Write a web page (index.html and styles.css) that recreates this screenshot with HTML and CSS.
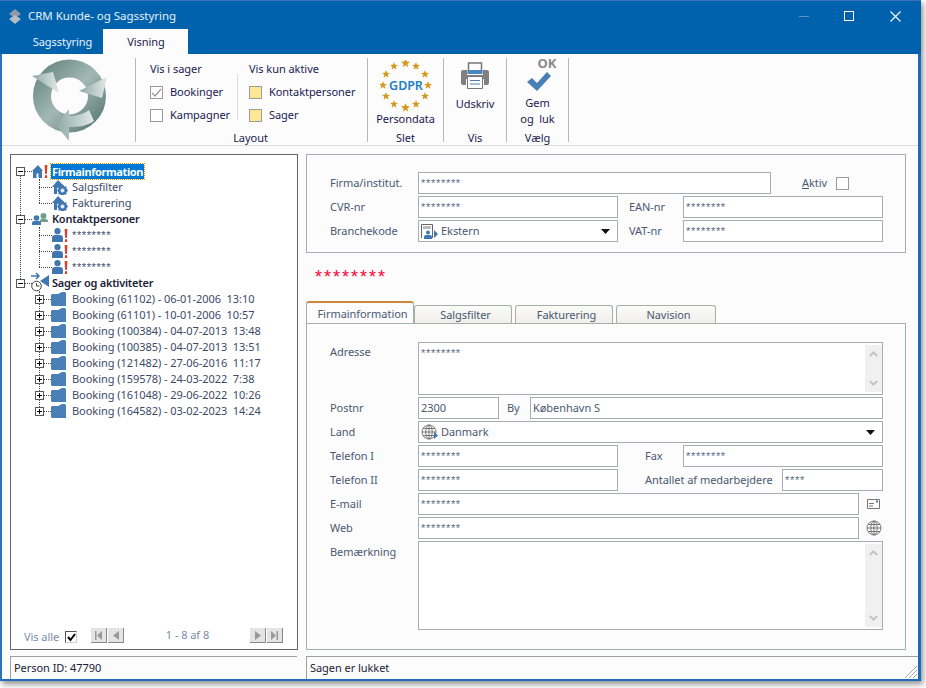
FILE: index.html
```html
<!DOCTYPE html>
<html lang="da">
<head>
<meta charset="utf-8">
<title>CRM Kunde- og Sagsstyring</title>
<link rel="stylesheet" href="styles.css">
</head>
<body>
<svg class="defs" width="0" height="0" aria-hidden="true">
  <defs>
    <linearGradient id="ring" x1="0" y1="0" x2="1" y2="1"><stop offset="0" stop-color="#6b8a83"/><stop offset=".5" stop-color="#a3b8b3"/><stop offset="1" stop-color="#5f7f78"/></linearGradient>
    <linearGradient id="head" x1="0" y1="0" x2="1" y2="0"><stop offset="0" stop-color="#8fa8a2"/><stop offset="1" stop-color="#e2e9e7"/></linearGradient>
    <symbol id="star" viewBox="0 0 10 10"><polygon points="5,0 6.300,3.400 10,3.600 7.100,6 8.100,9.600 5,7.600 1.900,9.600 2.900,6 0,3.600 3.700,3.400"/></symbol>
    <symbol id="home" viewBox="0 0 11 13"><path fill="#3f77b0" d="M6 0 11 6H10V13H6.500V8.500h-2V13H1V6H0z"/></symbol>
    <symbol id="homegear" viewBox="0 0 16 16"><path fill="#3f77b0" d="M6 1 12 7 5 9v6H2V8H0z"/><path fill="#3f77b0" d="M10.500 5.500 12.500 7.500h2v2l1.500 2-1.500 2v2h-2l-2 1.500-2-1.500h-2v-2l-1.500-2 1.500-2v-2h2z"/><circle cx="10.500" cy="11.500" r="2" fill="#dfe8f2"/></symbol>
    <symbol id="person" viewBox="0 0 11 14"><circle cx="5.500" cy="3.200" r="3.100" fill="#3f77b0"/><path fill="#3f77b0" d="M0 14V9.500C0 8 1.500 7 3 7h5c1.500 0 3 1 3 2.500V14z"/></symbol>
    <symbol id="people" viewBox="0 0 16 12"><circle cx="11.500" cy="3" r="3" fill="#6fa08e"/><path fill="#6fa08e" d="M8 9V7.500C8 6.500 9 6 10 6h3.500c1.300 0 2.500.7 2.500 2v1z"/><circle cx="4.500" cy="5" r="2.800" fill="#3f77b0"/><path fill="#3f77b0" d="M0 12v-2c0-1.200 1-2 2-2h5c1.200 0 2 .8 2 2v2z"/></symbol>
    <symbol id="timer" viewBox="0 0 18 20"><path fill="none" stroke="#3f77b0" stroke-width="1.500" d="M0 4h8M5 1l3 3-3 3"/><polygon fill="#3f77b0" points="18,3 18,15 9,9"/><circle cx="5.500" cy="14" r="4.800" fill="#fff" stroke="#444"/><path fill="none" stroke="#444" d="M5.500 11v3h3"/></symbol>
    <symbol id="folder" viewBox="0 0 15 14"><path fill="#4a7fb8" d="M0 3.500Q0 2 1.500 2H7L11 0h2.500Q15 0 15 1.500V14H1.500Q0 14 0 12.500z"/></symbol>
    <symbol id="bang" viewBox="0 0 4 14"><path fill="#d9402a" d="M.5 0h3L3 9.500H1zM.8 11h2.400v3H.8z"/></symbol>
    <symbol id="globe" viewBox="0 0 16 16"><g fill="none" stroke="#777"><circle cx="8" cy="8" r="7"/><ellipse cx="8" cy="8" rx="3.200" ry="7"/><path d="M1 8h14M2 4.500h12M2 11.500h12M8 1v14"/></g></symbol>
    <symbol id="up" viewBox="0 0 9 6"><path fill="none" stroke="#c4c4c4" stroke-width="2" d="M.8 5 4.500 1.500 8.200 5"/></symbol>
    <symbol id="down" viewBox="0 0 9 6"><path fill="none" stroke="#c4c4c4" stroke-width="2" d="M.8 1 4.500 4.500 8.200 1"/></symbol>
    <symbol id="tri" viewBox="0 0 9 5"><path fill="#111" d="M0 0h9L4.500 5z"/></symbol>
  </defs>
</svg>

<div class="window">
  <header class="titlebar">
    <div class="caption">
      <svg class="appicon" width="12" height="15" viewBox="0 0 12 15"><polygon fill="#8f9ba8" points="6,0 12,5 6,9 0,5"/><polygon fill="#b4bcc4" points="6,6 12,10 6,15 0,10"/></svg>
      <span class="apptitle">CRM Kunde- og Sagsstyring</span>
      <div class="winbtns">
        <span class="wb-min"></span>
        <span class="wb-max"></span>
        <svg class="wb-close" width="11" height="11" viewBox="0 0 11 11"><path stroke="#fff" stroke-width="1.100" d="M.5.500l10 10M10.500.500l-10 10"/></svg>
      </div>
    </div>
    <nav class="maintabs">
      <span class="mtab">Sagsstyring</span>
      <span class="mtab on">Visning</span>
    </nav>
  </header>

  <section class="ribbon">
    <div class="logo">
      <svg width="80" height="86" viewBox="30 58 80 86">
        <circle cx="69.500" cy="96" r="27.500" fill="none" stroke="url(#ring)" stroke-width="18"/>
        <polygon fill="url(#head)" points="32,76 53,72 59,93"/>
        <polygon fill="url(#head)" points="107,77 102,98 79,91"/>
        <path fill="url(#head)" d="M69 109v7c8 0 14-2 20-6l5 11c-7 5-15 6-25 6v14L56 125z"/>
      </svg>
    </div>
    <div class="rgroup g-layout">
      <div class="rbody layout-body">
        <div class="rcol col-a">
          <div class="rhead">Vis i sager</div>
          <label class="opt"><span class="cb"><svg width="11" height="11" viewBox="0 0 11 11"><path fill="none" stroke="#999" stroke-width="1.200" d="M1 6l3 3 6-7"/></svg></span>Bookinger</label>
          <label class="opt"><span class="cb"></span>Kampagner</label>
        </div>
        <div class="rcol col-b">
          <div class="rhead">Vis kun aktive</div>
          <label class="opt"><span class="cb yellow"></span>Kontaktpersoner</label>
          <label class="opt"><span class="cb yellow"></span>Sager</label>
        </div>
      </div>
      <div class="rcap cap-layout">Layout</div>
    </div>
    <div class="rgroup g-slet">
      <div class="rbody bigbtn">
        <svg class="gdpr" width="54" height="52" viewBox="378 60 54 52" fill="#d49a1e">
          <use href="#star" x="400" y="58.500" width="9" height="9"/>
          <use href="#star" x="389" y="62" width="8" height="8"/><use href="#star" x="411" y="62" width="8" height="8"/>
          <use href="#star" x="381" y="70" width="8" height="8"/><use href="#star" x="420" y="70" width="8" height="8"/>
          <use href="#star" x="378" y="81" width="8" height="8"/><use href="#star" x="423" y="81" width="8" height="8"/>
          <use href="#star" x="381" y="92" width="8" height="8"/><use href="#star" x="420" y="92" width="8" height="8"/>
          <use href="#star" x="389" y="100" width="8" height="8"/><use href="#star" x="411" y="100" width="8" height="8"/>
          <use href="#star" x="400" y="103" width="9" height="9"/>
          <text x="405" y="89.500" text-anchor="middle" class="gdprtext">GDPR</text>
        </svg>
        <span class="bl">Persondata</span>
      </div>
      <div class="rcap">Slet</div>
    </div>
    <div class="rgroup g-vis">
      <div class="rbody bigbtn">
        <svg class="printer" width="30" height="27" viewBox="0 0 30 27">
          <path fill="#fff" stroke="#777" stroke-width="1.500" d="M8.500 1h13v10h-13z"/>
          <path fill="#4a86c0" d="M7.500 8h15v4h-15z"/>
          <path fill="#808080" d="M3 8h4v5h16V8h4q2 0 2 2v11q0 2-2 2h-3v-6H6v6H3q-2 0-2-2V10q0-2 2-2z"/>
          <path fill="#fff" stroke="#777" d="M7.500 14.500h15v12h-15z"/>
          <path stroke="#4a7fb5" d="M10 18.500h10M10 22h10"/>
        </svg>
        <span class="bl">Udskriv</span>
      </div>
      <div class="rcap">Vis</div>
    </div>
    <div class="rgroup g-vaelg">
      <div class="rbody bigbtn">
        <div class="okmark">
          <span class="oktext">OK</span>
          <svg width="24" height="20" viewBox="0 0 24 20"><polygon fill="#4a7fb5" points="0,10 5,6 10,11 20,0 24,4 10,19"/></svg>
        </div>
        <span class="bl">Gem</span>
        <span class="bl pre">og  luk</span>
      </div>
      <div class="rcap">Vælg</div>
    </div>
  </section>

  <main class="work">
    <div class="panes">
      <aside class="treepane">
        <div class="tree">
          <div class="row lv0"><span class="box minus"></span><span class="conn c0"></span><span class="ic0"><svg width="11" height="13"><use href="#home"/></svg><svg width="4" height="13"><use href="#bang"/></svg></span><span class="t sel">Firmainformation</span></div>
          <div class="kids">
            <div class="row lv1"><span class="conn c1"></span><svg class="ic1" width="16" height="16"><use href="#homegear"/></svg><span class="t">Salgsfilter</span></div>
            <div class="row lv1"><span class="conn c1"></span><svg class="ic1" width="16" height="16"><use href="#homegear"/></svg><span class="t">Fakturering</span></div>
          </div>
          <div class="row lv0"><span class="box minus"></span><span class="conn c0"></span><span class="ic0"><svg width="16" height="12"><use href="#people"/></svg></span><span class="t b">Kontaktpersoner</span></div>
          <div class="kids">
            <div class="row lv1"><span class="conn c1"></span><svg class="ic1p" width="11" height="14"><use href="#person"/></svg><svg class="ic1b" width="4" height="13"><use href="#bang"/></svg><span class="t star">********</span></div>
            <div class="row lv1"><span class="conn c1"></span><svg class="ic1p" width="11" height="14"><use href="#person"/></svg><svg class="ic1b" width="4" height="13"><use href="#bang"/></svg><span class="t star">********</span></div>
            <div class="row lv1"><span class="conn c1"></span><svg class="ic1p" width="11" height="14"><use href="#person"/></svg><svg class="ic1b" width="4" height="13"><use href="#bang"/></svg><span class="t star">********</span></div>
          </div>
          <div class="row lv0"><span class="box minus"></span><span class="conn c0"></span><span class="ic0"><svg width="18" height="20" class="timer"><use href="#timer"/></svg></span><span class="t b">Sager og aktiviteter</span></div>
          <div class="kids bookings">
            <div class="row lv2"><span class="box plus"></span><span class="conn c2"></span><svg class="ic2" width="15" height="14"><use href="#folder"/></svg><span class="t">Booking (61102) - 06-01-2006  13:10</span></div>
            <div class="row lv2"><span class="box plus"></span><span class="conn c2"></span><svg class="ic2" width="15" height="14"><use href="#folder"/></svg><span class="t">Booking (61101) - 10-01-2006  10:57</span></div>
            <div class="row lv2"><span class="box plus"></span><span class="conn c2"></span><svg class="ic2" width="15" height="14"><use href="#folder"/></svg><span class="t">Booking (100384) - 04-07-2013  13:48</span></div>
            <div class="row lv2"><span class="box plus"></span><span class="conn c2"></span><svg class="ic2" width="15" height="14"><use href="#folder"/></svg><span class="t">Booking (100385) - 04-07-2013  13:51</span></div>
            <div class="row lv2"><span class="box plus"></span><span class="conn c2"></span><svg class="ic2" width="15" height="14"><use href="#folder"/></svg><span class="t">Booking (121482) - 27-06-2016  11:17</span></div>
            <div class="row lv2"><span class="box plus"></span><span class="conn c2"></span><svg class="ic2" width="15" height="14"><use href="#folder"/></svg><span class="t">Booking (159578) - 24-03-2022  7:38</span></div>
            <div class="row lv2"><span class="box plus"></span><span class="conn c2"></span><svg class="ic2" width="15" height="14"><use href="#folder"/></svg><span class="t">Booking (161048) - 29-06-2022  10:26</span></div>
            <div class="row lv2"><span class="box plus"></span><span class="conn c2"></span><svg class="ic2" width="15" height="14"><use href="#folder"/></svg><span class="t">Booking (164582) - 03-02-2023  14:24</span></div>
          </div>
        </div>
        <div class="pager">
          <span class="visalle">Vis alle</span>
          <span class="vacheck"><svg width="9" height="9" viewBox="0 0 9 9"><path fill="none" stroke="#000" stroke-width="2" d="M1 4l2.500 3L8 1"/></svg></span>
          <span class="navbtn first"><svg width="7" height="9" viewBox="0 0 7 9"><path fill="#999" d="M0 0h1.500v9H0zM7 0v9L2 4.500z"/></svg></span>
          <span class="navbtn"><svg width="6" height="9" viewBox="0 0 6 9"><path fill="#999" d="M6 0v9L0 4.500z"/></svg></span>
          <span class="pcount">1 - 8 af 8</span>
          <span class="navbtn"><svg width="6" height="9" viewBox="0 0 6 9"><path fill="#999" d="M0 0v9l6-4.500z"/></svg></span>
          <span class="navbtn"><svg width="7" height="9" viewBox="0 0 7 9"><path fill="#999" d="M7 0H5.500v9H7zM0 0v9l5-4.500z"/></svg></span>
        </div>
      </aside>

      <section class="formpane">
        <div class="topgroup">
          <div class="frow"><span class="lab">Firma/institut.</span><span class="in w353 ast">********</span><span class="lab aktiv"><u>A</u>ktiv</span><span class="cb aktivbox"></span></div>
          <div class="frow"><span class="lab">CVR-nr</span><span class="in w200 ast">********</span><span class="lab lab2">EAN-nr</span><span class="in w200 ast">********</span></div>
          <div class="frow"><span class="lab">Branchekode</span><span class="in w200 sel-in"><svg class="brico" width="17" height="15" viewBox="0 0 17 15"><path fill="none" stroke="#666" d="M.5 14V.5h11V14"/><path fill="#bbb" d="M2 2h8v3H2z"/><circle cx="7" cy="8.500" r="2" fill="#3f77b0"/><path fill="#3f77b0" d="M3 15v-2q0-2 2-2h4q2 0 2 2v2z"/><path fill="#3f77b0" d="M13 6l4 4-4 4z"/></svg>Ekstern<svg class="drop" width="9" height="5"><use href="#tri"/></svg></span><span class="lab lab2">VAT-nr</span><span class="in w200 ast">********</span></div>
        </div>
        <div class="redrow">********</div>
        <div class="tabs">
          <span class="tab on">Firmainformation</span>
          <span class="tab t2">Salgsfilter</span>
          <span class="tab t3">Fakturering</span>
          <span class="tab t4">Navision</span>
        </div>
        <div class="tabpanel">
          <div class="frow tall"><span class="lab">Adresse</span><span class="in w465 ast area">********<span class="sbar"><svg width="9" height="6"><use href="#up"/></svg><svg width="9" height="6"><use href="#down"/></svg></span></span></div>
          <div class="frow"><span class="lab">Postnr</span><span class="in w81 val">2300</span><span class="lab by">By</span><span class="in w353 val">København S</span></div>
          <div class="frow"><span class="lab">Land</span><span class="in w465 sel-in"><svg class="glico" width="16" height="16"><use href="#globe"/></svg><svg class="glarrow" width="4" height="7" viewBox="0 0 4 7"><path fill="#3f77b0" d="M0 0l4 3.500L0 7z"/></svg>Danmark<svg class="drop" width="9" height="5"><use href="#tri"/></svg></span></div>
          <div class="frow"><span class="lab">Telefon I</span><span class="in w200 ast">********</span><span class="lab lab3">Fax</span><span class="in w200 ast">********</span></div>
          <div class="frow"><span class="lab">Telefon II</span><span class="in w200 ast">********</span><span class="lab lab4">Antallet af medarbejdere</span><span class="in w101 ast">****</span></div>
          <div class="frow"><span class="lab">E-mail</span><span class="in w441 ast">********</span><svg class="side mail" width="13" height="10" viewBox="0 0 13 10"><path fill="none" stroke="#777" d="M.5.500h12v9H.5z"/><path stroke="#777" d="M2 4.500h5M2 7h4"/><path fill="#3f77b0" d="M9 1.500h2v2H9z"/></svg></div>
          <div class="frow"><span class="lab">Web</span><span class="in w441 ast">********</span><svg class="side" width="16" height="16"><use href="#globe"/></svg></div>
          <div class="frow note"><span class="lab">Bemærkning</span><span class="in w465 area"><span class="sbar"><svg width="9" height="6"><use href="#up"/></svg><svg width="9" height="6"><use href="#down"/></svg></span></span></div>
        </div>
      </section>
    </div>
    <footer class="status">
      <div class="st st1">Person ID: 47790</div>
      <div class="st st2">Sagen er lukket
        <svg class="grip" width="12" height="12" viewBox="0 0 12 12"><path stroke="#a8a8a8" d="M0 12 12 0M4 12l8-8M8 12l4-4"/></svg>
      </div>
    </footer>
  </main>
</div>
</body>
</html>
```

FILE: styles.css
```css
* { box-sizing: border-box; }
html, body { margin: 0; height: 100%; background: #fff; overflow: hidden; }
body { font: 11px/16px "Noto Sans", "Open Sans", sans-serif; letter-spacing: -.05px; color: #222; }
.defs { position: absolute; }

.window {
  width: 921px; height: 681px;
  border-left: 2px solid #2c72bf; border-right: 3px solid #2068b8; border-bottom: 2px solid #1f6bbd;
  background: #fcfcfc;
  box-shadow: 2px 3px 6px rgba(0,0,0,.45);
  display: flex; flex-direction: column;
}

/* title */
.titlebar { height: 54px; background: #0062ad; border-top: 1px solid #3a70bc; display: flex; flex-direction: column; margin: 0 -3px 0 -2px; padding: 0 3px 0 2px; flex: none; }
.caption { height: 28px; display: flex; align-items: center; padding-left: 7px; }
.appicon { margin-right: 7px; margin-top: 2px; }
.apptitle { color: #e8f0f8; font-size: 11.500px; margin-top: 1px; }
.winbtns { margin-left: auto; display: flex; align-items: center; padding-right: 17px; margin-top: 2px; }
.wb-min { width: 10px; height: 1px; background: #5a94c8; margin-right: 35px; }
.wb-max { width: 10px; height: 10px; border: 1px solid #fff; margin-right: 36px; }
.maintabs { display: flex; height: 25px; }
.mtab { color: #eaf2f9; font-size: 11px; display: flex; align-items: center; justify-content: center; height: 25px; }
.mtab:first-child { width: 101px; padding-left: 20px; }
.mtab.on { width: 85px; background: #fcfcfc; color: #1a1a4a; padding-left: 1px; }

/* ribbon */
.ribbon { height: 92px; display: flex; border-bottom: 1px solid #dcdcdc; padding-top: 4px; color: #1a1a50; flex: none; }
.logo { width: 133px; padding: 0 0 0 28px; display: flex; align-items: flex-start; }
.rgroup { border-left: 1px solid #b8b8b8; display: flex; flex-direction: column; height: 84px; }
.rbody { height: 71px; flex: none; }
.rcap { text-align: center; height: 14px; line-height: 14px; margin-top: 2px; flex: none; }
.cap-layout { padding-right: 2px; }
.g-layout { width: 232px; }
.g-slet { width: 76px; }
.g-vis { width: 63px; }
.g-vaelg { width: 63px; border-right: 1px solid #b8b8b8; }
.layout-body { display: flex; padding-top: 3px; }
.rcol { padding-left: 14px; }
.col-a { width: 102px; position: relative; border-right: 0; }
.col-a::after { content: ""; position: absolute; right: 0; top: 13px; height: 46px; width: 1px; background: #dcdcdc; }
.col-b { padding-left: 11px; }
.rhead { height: 16px; margin-bottom: 7px; white-space: nowrap; }
.opt { display: flex; align-items: center; height: 16px; margin-bottom: 7px; white-space: nowrap; }
.cb { width: 13px; height: 13px; border: 1px solid #9a9a9a; background: #fff; margin-right: 7px; display: flex; align-items: center; justify-content: center; flex: none; }
.cb.yellow { background: #ffe794; }
.bigbtn { display: flex; flex-direction: column; align-items: center; }
.gdpr { margin-top: 2px; flex: none; }
.gdprtext { font: 600 12.500px "Noto Sans", sans-serif; fill: #1f7fc4; }
.bl { height: 16px; white-space: nowrap; line-height: 16px; flex: none; }
.pre { white-space: pre; }
.g-slet .bl { margin-top: -1px; }
.printer { margin: 4px 0 7px; flex: none; }
.okmark { width: 30px; height: 34px; position: relative; display: flex; align-items: flex-end; padding-left: 2px; margin-bottom: 3px; flex: none; }
.okmark svg { margin-left: 2px; }
.oktext { position: absolute; left: 15px; top: -3px; font: 700 13px/16px "Noto Sans", sans-serif; color: #8a8a8a; }

/* work */
.work { flex: 1; display: flex; flex-direction: column; padding-top: 8px; min-height: 0; }
.panes { height: 496px; display: flex; gap: 8px; padding-left: 8px; flex: none; }
.treepane { width: 288px; border: 1px solid #666; background: #fff; display: flex; flex-direction: column; }
.tree { flex: 1; position: relative; padding-top: 8px; }
.tree::before { content: ""; position: absolute; left: 9px; top: 20px; height: 108px; border-left: 1px dotted #444; }
.row { display: flex; align-items: center; height: 16px; white-space: pre; position: relative; color: #3c4a68; }
.box { width: 9px; height: 9px; border: 1px solid #555; background: #fff; position: relative; flex: none; z-index: 1; }
.minus::before, .plus::before { content: ""; position: absolute; left: 1px; top: 3px; width: 5px; height: 1px; background: #000; }
.plus::after { content: ""; position: absolute; left: 3px; top: 1px; width: 1px; height: 5px; background: #000; }
.conn { border-top: 1px dotted #444; height: 0; flex: none; }
.c0 { width: 7px; }
.c1 { width: 13px; }
.c2 { width: 7px; }
.lv0 { padding-left: 5px; }
.lv1 { padding-left: 28px; }
.lv2 { padding-left: 24px; }
.ic0 { width: 19px; display: flex; align-items: center; gap: 1px; height: 16px; flex: none; }
.timer { margin-top: -3px; margin-left: -1px; }
.t { padding: 0 1px; }
.sel { background: #0078d7; color: #fff; font-weight: 700; letter-spacing: -.4px; outline: 1px dotted #d9a100; height: 15px; line-height: 15px; padding: 0 1px; }
.b { font-weight: 600; letter-spacing: -.25px; color: #1c2238; }
.star { font-family: "Liberation Sans", sans-serif; letter-spacing: .6px; }
.ic1 { margin-right: 3px; flex: none; }
.ic1p { flex: none; margin-right: 1px; }
.ic1b { flex: none; margin-right: 3px; }
.ic2 { margin-right: 5px; flex: none; }
.kids { position: relative; }
.kids::before { content: ""; position: absolute; left: 28px; top: 0; bottom: 8px; border-left: 1px dotted #444; }
.pager { height: 24px; display: flex; align-items: flex-start; padding-left: 13px; color: #7a8ba8; flex: none; }
.visalle { margin-top: 4px; width: 41px; }
.vacheck { width: 12px; height: 12px; border: 1px solid #777; border-color: #555 #ccc #ccc #555; background: #fff; display: flex; align-items: center; justify-content: center; margin-top: 6px; }
.navbtn { width: 16px; height: 15px; background: #e4e4e4; border-right: 1px solid #888; border-bottom: 1px solid #888; display: flex; align-items: center; justify-content: center; margin: 3px 1px 0 0; }
.first { margin-left: 14px; }
.pcount { width: 125px; text-align: center; margin-top: 2px; }

.formpane { width: 600px; display: flex; flex-direction: column; }
.topgroup { height: 99px; border: 1px solid #a8acb0; padding: 17px 0 0 23px; display: flex; flex-direction: column; gap: 2px; flex: none; }
.frow { display: flex; align-items: center; height: 22px; flex: none; }
.lab { width: 88px; color: #4a5872; white-space: nowrap; flex: none; }
.in { height: 22px; border: 1px solid #a8acb0; background: #fff; display: flex; align-items: center; padding-left: 2px; position: relative; white-space: nowrap; color: #4a5872; flex: none; }
.ast { font: 11px/16px "Liberation Sans", sans-serif; letter-spacing: .7px; color: #5a6a86; align-items: flex-start; padding-top: 2px; }
.val { color: #4a5872; }
.w353 { width: 353px; }
.w200 { width: 200px; }
.w465 { width: 465px; }
.w441 { width: 441px; }
.w81 { width: 81px; }
.w101 { width: 101px; }
.aktiv { width: 34px; margin-left: 31px; }
.aktivbox { margin: 0; }
.lab2 { width: 54px; margin-left: 11px; }
.lab3 { width: 38px; margin-left: 27px; }
.lab4 { width: 137px; margin-left: 27px; }
.by { width: 23px; margin-left: 8px; }
.brico { margin-right: 3px; flex: none; }
.glico { flex: none; }
.glarrow { margin: 6px 3px 0 -3px; flex: none; }
.drop { position: absolute; right: 7px; top: 8px; }
.redrow { height: 48px; padding: 12px 0 0 9px; color: #ff0033; font: 18px/24px "Liberation Sans", sans-serif; letter-spacing: 2px; flex: none; }
.tabs { height: 22px; display: flex; align-items: flex-end; flex: none; color: #4a5872; }
.tab { height: 18px; width: 98px; border: 1px solid #a4aeaa; border-bottom: 0; border-radius: 3px 3px 0 0; background: linear-gradient(#fbfbf8, #f0eeea); text-align: center; line-height: 18px; padding-left: 5px; margin-right: 3px; }
.tab.on { height: 22px; width: 108px; margin-right: 0; background: #fcfcfc; border-top: 2px solid #d0883c; line-height: 22px; }
.t4 { width: 100px; }
.tabpanel { height: 327px; border: 1px solid #a4aeaa; padding: 18px 0 0 23px; display: flex; flex-direction: column; gap: 2px; flex: none; }
.tall, .tall .in { height: 53px; }
.tall, .note { align-items: flex-start; }
.tall .lab { margin-top: 2px; }
.note .lab { margin-top: 3px; }
.note, .note .in { height: 89px; }
.sbar { position: absolute; right: 0; top: 2px; bottom: 2px; width: 17px; background: #f0f0f0; display: flex; flex-direction: column; align-items: center; justify-content: space-between; padding: 6px 0; }
.side { margin-left: 7px; flex: none; }
.mail { margin-left: 8px; }

.status { display: flex; height: 23px; margin-top: 6px; padding-left: 8px; gap: 9px; flex: none; }
.st { border-top: 1px solid #a0a0a0; border-left: 1px solid #a0a0a0; padding: 3px 0 0 3px; color: #1c2238; white-space: nowrap; }
.st1 { width: 287px; }
.st2 { width: 612px; position: relative; }
.grip { position: absolute; right: 1px; bottom: 1px; }
```
